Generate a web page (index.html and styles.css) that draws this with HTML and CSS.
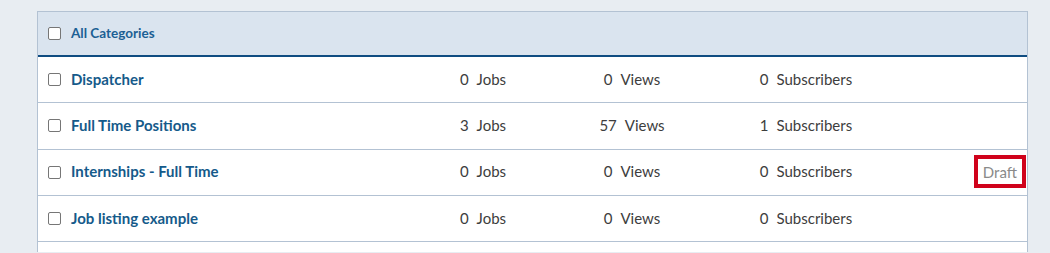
FILE: index.html
```html
<!DOCTYPE html>
<html lang="en">
<head>
<meta charset="utf-8">
<title>Categories</title>
<link rel="stylesheet" href="styles.css">
</head>
<body>
<div class="table">
  <div class="head">
    <span class="cb"><input type="checkbox" class="check"></span>
    <span class="head-title">All Categories</span>
  </div>
  <div class="row">
    <span class="cb"><input type="checkbox" class="check"></span>
    <a class="name" href="#">Dispatcher</a>
    <span class="stat c-jobs"><span class="num">0</span><span>Jobs</span></span>
    <span class="stat c-views"><span class="num">0</span><span>Views</span></span>
    <span class="stat c-subs"><span class="num">0</span><span>Subscribers</span></span>
    <span class="status"></span>
  </div>
  <div class="row">
    <span class="cb"><input type="checkbox" class="check"></span>
    <a class="name" href="#">Full Time Positions</a>
    <span class="stat c-jobs"><span class="num">3</span><span>Jobs</span></span>
    <span class="stat c-views"><span class="num">57</span><span>Views</span></span>
    <span class="stat c-subs"><span class="num">1</span><span>Subscribers</span></span>
    <span class="status"></span>
  </div>
  <div class="row">
    <span class="cb"><input type="checkbox" class="check"></span>
    <a class="name" href="#">Internships - Full Time</a>
    <span class="stat c-jobs"><span class="num">0</span><span>Jobs</span></span>
    <span class="stat c-views"><span class="num">0</span><span>Views</span></span>
    <span class="stat c-subs"><span class="num">0</span><span>Subscribers</span></span>
    <span class="status"><span class="draft">Draft</span></span>
  </div>
  <div class="row">
    <span class="cb"><input type="checkbox" class="check"></span>
    <a class="name" href="#">Job listing example</a>
    <span class="stat c-jobs"><span class="num">0</span><span>Jobs</span></span>
    <span class="stat c-views"><span class="num">0</span><span>Views</span></span>
    <span class="stat c-subs"><span class="num">0</span><span>Subscribers</span></span>
    <span class="status"></span>
  </div>
  <div class="row-more"></div>
</div>
</body>
</html>
```
FILE: styles.css
```css
html, body {
  margin: 0;
  padding: 0;
}
body {
  background: #e8edf2;
  font-family: Lato, "Open Sans", Arial, sans-serif;
  font-size: 15px;
  color: #3d3d3d;
  padding: 11px 22px 0 37px;
}
.table {
  background: #fff;
  border: 1px solid #b3c2d3;
  border-bottom: none;
  width: 989px;
}
.head {
  display: flex;
  align-items: center;
  height: 43px;
  background: #dae4ef;
  border-bottom: 2px solid #0f4c81;
}
.cb {
  width: 33px;
  display: flex;
  align-items: center;
  padding-left: 10px;
  box-sizing: border-box;
}
.check {
  appearance: none;
  -webkit-appearance: none;
  margin: 0;
  width: 13px;
  height: 13px;
  border: 1px solid #767676;
  border-radius: 2px;
  background: #fff;
  box-sizing: border-box;
}
.head-title {
  font-weight: 700;
  font-size: 13.5px;
  color: #1c5f94;
  margin-top: -1px;
}
.row {
  display: grid;
  grid-template-columns: 33px 340px 144px 154px 194px 1fr;
  align-items: center;
  height: 45.33px;
  border-bottom: 1px solid #b3c2d3;
  line-height: 18px;
}
.row > * {
  margin-top: -2px;
}
.row > .cb {
  margin-top: 0;
}
.row-more {
  height: 10px;
}
.name {
  font-weight: 700;
  color: #155a8a;
  text-decoration: none;
}
.stat {
  display: flex;
  justify-content: center;
  gap: 8px;
}
.status {
  display: flex;
  justify-content: flex-end;
  padding-right: 1px;
}
.draft {
  border: 4px solid #d0021b;
  color: #8a8a8a;
  padding: 4px 5px 3px;
  line-height: 18px;
}
```
